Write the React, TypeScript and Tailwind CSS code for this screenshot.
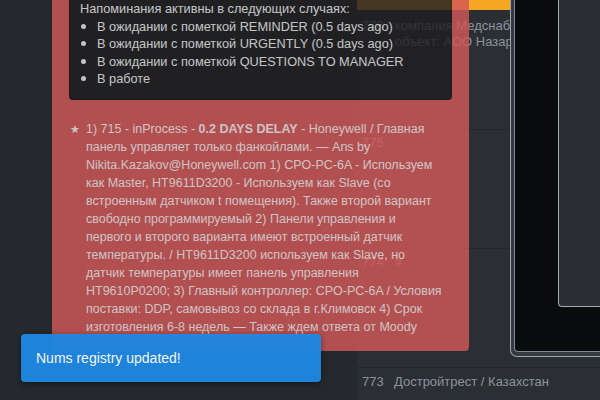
const reminders = [
  "В ожидании с пометкой REMINDER (0.5 days ago)",
  "В ожидании с пометкой URGENTLY (0.5 days ago)",
  "В ожидании с пометкой QUESTIONS TO MANAGER",
  "В работе",
];

const noteLines = [
  "панель управляет только фанкойлами. — Ans by",
  "Nikita.Kazakov@Honeywell.com 1) CPO-PC-6A - Используем",
  "как Master, HT9611D3200 - Используем как Slave (со",
  "встроенным датчиком t помещения). Также второй вариант",
  "свободно программируемый 2) Панели управления и",
  "первого и второго варианта имеют встроенный датчик",
  "температуры. / HT9611D3200 используем как Slave, но",
  "датчик температуры имеет панель управления",
  "HT9610P0200; 3) Главный контроллер: CPO-PC-6A / Условия",
  "поставки: DDP, самовывоз со склада в г.Климовск 4) Срок",
  "изготовления 6-8 недель — Также ждем ответа от Moody",
];

function Viewer() {
  return (
    <div className="w-[90px] h-[357px] shrink-0 border-l border-b border-[#9aa3ad] rounded-bl-[7px] bg-[#343a41] pl-[3px] pb-[4px]">
      <div className="h-full border-l border-b border-[#7e8994] rounded-bl-[4px] bg-[#0a0b0c] pl-[43px]">
        <div className="h-[307px] border-l border-b border-[#a3abb3] rounded-bl-[4px] bg-[#2a2d31]" />
      </div>
    </div>
  );
}

function Rows() {
  return (
    <div className="w-[153px] shrink-0 flex flex-col text-[13px] leading-[16px] text-[#8b939c]">
      <div className="h-[129px] flex flex-col">
        <div className="h-[10px] bg-[#f5a623]" />
        <div className="flex pt-[8px] pl-[5px] whitespace-nowrap overflow-hidden">
          <span className="w-[33px] shrink-0">778</span>
          <div className="flex flex-col">
            <span>компания Медснабсервис</span>
            <span>объект: АОО Назарбаев Университет</span>
          </div>
        </div>
      </div>
      <div className="h-[119px] border-t border-[#222529] pt-[5px] pl-[5px]">
        <span>775</span>
      </div>
      <div className="h-[119px] border-t border-[#222529] pt-[5px] pl-[5px] flex">
        <span className="w-[33px] shrink-0">774</span>
        <span>#</span>
      </div>
    </div>
  );
}

export default function App() {
  return (
    <div className="relative w-[600px] h-[400px] overflow-hidden bg-[#25282c] font-['Liberation_Sans',Arial,sans-serif]">
      <div className="flex h-full">
        <div className="w-[357px] shrink-0" />
        <div className="flex flex-col w-[243px] bg-[#2b2e33]">
          <div className="flex h-[367px]">
            <Rows />
            <Viewer />
          </div>
          <div className="flex-1 border-t border-[#222529] flex pt-[6px] pl-[5px] text-[13px] leading-[16px] text-[#8b939c]">
            <span className="w-[32px] shrink-0">773</span>
            <span>Достройтрест / Казахстан</span>
          </div>
        </div>
      </div>

      <div className="absolute left-[52px] top-0 w-[417px] h-[351px] rounded-b-[4px] bg-[#d25858] opacity-[0.82] px-[17px] overflow-hidden">
        <div className="-mt-[10px] pt-[10px] px-[10px] pb-[11px] rounded-b-[4px] bg-[#1f1f22] border border-t-0 border-[#18181a] text-[12.75px] leading-[17.5px] text-[#e6e6e6]">
          <div>Напоминания активны в следующих случаях:</div>
          {reminders.map((r) => (
            <div key={r} className="flex items-center">
              <span className="w-[5px] h-[5px] rounded-full bg-[#e6e6e6] ml-[1px] mr-[11px]" />
              <span>{r}</span>
            </div>
          ))}
        </div>
        <div className="flex mt-[20px] text-[12.5px] leading-[18px] text-[#f4e4e4]">
          <span className="w-[17px] shrink-0 pl-[1px] text-[11px]">★</span>
          <p className="whitespace-nowrap">
            1) 715 - inProcess - <b>0.2 DAYS DELAY</b> - Honeywell / Главная
            {noteLines.map((l) => (
              <span key={l} className="block">{l}</span>
            ))}
          </p>
        </div>
      </div>

      <div className="absolute left-[21px] top-[334px] w-[300px] h-[48px] rounded-[4px] bg-[#1e88e5] opacity-95 shadow-[0_2px_6px_rgba(0,0,0,0.4)] flex items-center px-[15px] text-[14px] text-white">
        Nums registry updated!
      </div>
    </div>
  );
}
